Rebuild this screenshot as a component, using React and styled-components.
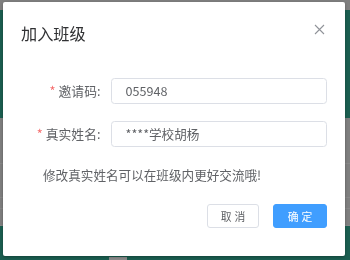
import React from 'react';
import styled, { createGlobalStyle } from 'styled-components';

const GlobalStyle = createGlobalStyle`
  html, body {
    margin: 0;
    padding: 0;
    width: 350px;
    height: 260px;
    overflow: hidden;
    font-family: "Noto Sans CJK SC", "Noto Sans", sans-serif;
  }
`;

const Page = styled.div`
  width: 350px;
  height: 260px;
  display: flex;
  flex-direction: column;
  background: #7f7f7f;
  overflow: hidden;
`;

const Band = styled.div`
  height: ${(p) => p.h}px;
  flex-shrink: 0;
  background: ${(p) => (p.green ? '#1b5e50' : '#7f7f7f')};
`;

const Rows = styled.div`
  display: flex;
  flex-direction: column;
  flex-shrink: 0;
`;

const Row = styled.div`
  height: ${(p) => p.h}px;
  border-bottom: 1px solid #888;
  box-sizing: border-box;
`;

const Footer = styled.div`
  flex: 1;
  background: #1b5e50;
  display: flex;
  align-items: flex-end;
  gap: 14px;
  padding-left: 109px;
`;

const GrayBlock = styled.div`
  width: 18px;
  height: 3px;
  background: #8a8a8a;
`;

const Overlay = styled.div`
  position: fixed;
  inset: 0;
`;

const Dialog = styled.div`
  position: absolute;
  left: 3px;
  top: 2px;
  width: 342px;
  height: 254px;
  background: #fff;
  border-radius: 2px;
  box-shadow: 0 1px 3px rgba(0, 0, 0, 0.3);
  box-sizing: border-box;
  display: flex;
  flex-direction: column;
`;

const Header = styled.div`
  position: relative;
  padding: 19px 18px 0;
  height: 49px;
  box-sizing: border-box;
`;

const Title = styled.span`
  font-size: 16.2px;
  line-height: 22px;
  color: #303133;
`;

const Close = styled.button`
  position: absolute;
  top: 21px;
  right: 20px;
  width: 12px;
  height: 12px;
  padding: 0;
  border: 0;
  background: none;
  display: flex;
  align-items: center;
  justify-content: center;
`;

const Body = styled.div`
  padding: 27px 18px 0;
  display: flex;
  flex-direction: column;
`;

const FormItem = styled.div`
  display: flex;
  align-items: center;
  margin-bottom: 17.5px;
`;

const Label = styled.label`
  width: 90px;
  padding-right: 10.5px;
  box-sizing: border-box;
  text-align: right;
  font-size: 12.8px;
  color: #606266;
  white-space: nowrap;
  &::before {
    content: '*';
    color: #f56c6c;
    margin-right: 3px;
  }
`;

const Input = styled.input`
  flex: 1;
  height: 25.5px;
  box-sizing: border-box;
  border: 1px solid #dcdfe6;
  border-radius: 3.5px;
  padding: 0 13.5px;
  font-family: inherit;
  font-size: 12.6px;
  color: #606266;
  outline: none;
`;

const Hint = styled.div`
  margin-left: 22px;
  font-size: 12.6px;
  line-height: 21px;
  color: #606266;
`;

const Actions = styled.div`
  margin-top: auto;
  padding: 0 18px 28px;
  display: flex;
  justify-content: flex-end;
  gap: 14px;
`;

const Button = styled.button`
  height: 24px;
  width: ${(p) => (p.primary ? 54 : 52)}px;
  box-sizing: border-box;
  border-radius: 3px;
  border: 1px solid ${(p) => (p.primary ? '#409eff' : '#dcdfe6')};
  background: ${(p) => (p.primary ? '#409eff' : '#fff')};
  color: ${(p) => (p.primary ? '#fff' : '#606266')};
  font-family: inherit;
  font-size: 10.8px;
  letter-spacing: 3px;
  padding: 0 0 0 3px;
  cursor: pointer;
`;

const App = () => (
  <>
    <GlobalStyle />
    <Page>
      <Band h={10} />
      <Band h={108} green />
      <Rows>
        <Row h={46} />
        <Row h={34} />
        <Row h={11} />
        <Row h={17} />
      </Rows>
      <Footer>
        <GrayBlock />
      </Footer>
    </Page>
    <Overlay>
      <Dialog>
        <Header>
          <Title>加入班级</Title>
          <Close aria-label="关闭">
            <svg width="11" height="11" viewBox="0 0 11 11">
              <path d="M1 1L10 10M10 1L1 10" stroke="#909399" strokeWidth="1.1" fill="none" />
            </svg>
          </Close>
        </Header>
        <Body>
          <FormItem>
            <Label>邀请码:</Label>
            <Input defaultValue="055948" />
          </FormItem>
          <FormItem>
            <Label>真实姓名:</Label>
            <Input defaultValue="****学校胡杨" />
          </FormItem>
          <Hint>修改真实姓名可以在班级内更好交流哦!</Hint>
        </Body>
        <Actions>
          <Button>取消</Button>
          <Button primary>确定</Button>
        </Actions>
      </Dialog>
    </Overlay>
  </>
);

export default App;
